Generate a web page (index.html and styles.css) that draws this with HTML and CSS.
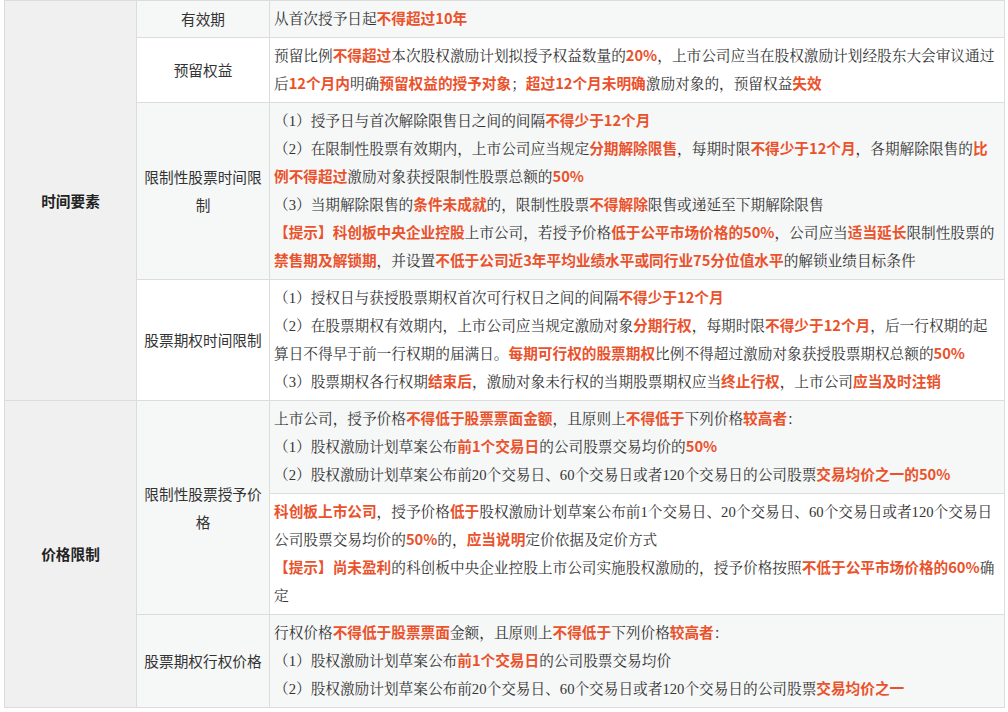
FILE: index.html
```html
<!DOCTYPE html>
<html lang="zh-CN">
<head>
<meta charset="utf-8">
<link rel="stylesheet" href="styles.css">
</head>
<body>
<table class="grid">
  <colgroup>
    <col class="c1"><col class="c2"><col class="c3">
  </colgroup>
  <tbody>
    <tr class="alt">
      <td class="cat" rowspan="4">时间要素</td>
      <td class="label">有效期</td>
      <td class="body"><div>从首次授予日起<b>不得超过10年</b></div></td>
    </tr>
    <tr>
      <td class="label">预留权益</td>
      <td class="body"><div>预留比例<b>不得超过</b>本次股权激励计划拟授予权益数量的<b>20%</b>，上市公司应当在股权激励计划经股东大会审议通过后<b>12个月内</b>明确<b>预留权益的授予对象</b>；<b>超过12个月未明确</b>激励对象的，预留权益<b>失效</b></div></td>
    </tr>
    <tr class="alt">
      <td class="label">限制性股票时间限制</td>
      <td class="body">
        <div>（1）授予日与首次解除限售日之间的间隔<b>不得少于12个月</b></div>
        <div>（2）在限制性股票有效期内，上市公司应当规定<b>分期解除限售</b>，每期时限<b>不得少于12个月</b>，各期解除限售的<b>比例不得超过</b>激励对象获授限制性股票总额的<b>50%</b></div>
        <div>（3）当期解除限售的<b>条件未成就</b>的，限制性股票<b>不得解除</b>限售或递延至下期解除限售</div>
        <div><b>【提示】科创板中央企业控股</b>上市公司，若授予价格<b>低于公平市场价格的50%</b>，公司应当<b>适当延长</b>限制性股票的<b>禁售期及解锁期</b>，并设置<b>不低于公司近3年平均业绩水平或同行业75分位值水平</b>的解锁业绩目标条件</div>
      </td>
    </tr>
    <tr>
      <td class="label">股票期权时间限制</td>
      <td class="body">
        <div>（1）授权日与获授股票期权首次可行权日之间的间隔<b>不得少于12个月</b></div>
        <div>（2）在股票期权有效期内，上市公司应当规定激励对象<b>分期行权</b>，每期时限<b>不得少于12个月</b>，后一行权期的起算日不得早于前一行权期的届满日。<b>每期可行权的股票期权</b>比例不得超过激励对象获授股票期权总额的<b>50%</b></div>
        <div>（3）股票期权各行权期<b>结束后</b>，激励对象未行权的当期股票期权应当<b>终止行权</b>，上市公司<b>应当及时注销</b></div>
      </td>
    </tr>
    <tr class="alt">
      <td class="cat" rowspan="3">价格限制</td>
      <td class="label" rowspan="2">限制性股票授予价格</td>
      <td class="body">
        <div>上市公司，授予价格<b>不得低于股票票面金额</b>，且原则上<b>不得低于</b>下列价格<b>较高者</b>：</div>
        <div>（1）股权激励计划草案公布<b>前1个交易日</b>的公司股票交易均价的<b>50%</b></div>
        <div>（2）股权激励计划草案公布前20个交易日、60个交易日或者120个交易日的公司股票<b>交易均价之一的50%</b></div>
      </td>
    </tr>
    <tr>
      <td class="body">
        <div><b>科创板上市公司</b>，授予价格<b>低于</b>股权激励计划草案公布前1个交易日、20个交易日、60个交易日或者120个交易日公司股票交易均价的<b>50%</b>的，<b>应当说明</b>定价依据及定价方式</div>
        <div><b>【提示】尚未盈利</b>的科创板中央企业控股上市公司实施股权激励的，授予价格按照<b>不低于公平市场价格的60%</b>确定</div>
      </td>
    </tr>
    <tr class="alt">
      <td class="label">股票期权行权价格</td>
      <td class="body">
        <div>行权价格<b>不得低于股票票面</b>金额，且原则上<b>不得低于</b>下列价格<b>较高者</b>：</div>
        <div>（1）股权激励计划草案公布<b>前1个交易日</b>的公司股票交易均价</div>
        <div>（2）股权激励计划草案公布前20个交易日、60个交易日或者120个交易日的公司股票<b>交易均价之一</b></div>
      </td>
    </tr>
  </tbody>
</table>
</body>
</html>
```

FILE: styles.css
```css
html, body {
  margin: 0;
  padding: 0;
  background: #ffffff;
}

body {
  font-family: "Liberation Serif", "Noto Serif CJK SC", "Noto Sans CJK SC", serif;
  font-size: 14.67px;
  color: #333333;
}

.grid {
  margin: 0 0 0 4px;
  width: 1000px;
  table-layout: fixed;
  border-collapse: collapse;
}

.c1 { width: 132px; }
.c2 { width: 133px; }
.c3 { width: 735px; }

.grid td {
  border: 1px solid #dcdcdc;
  padding: 4px;
  line-height: 28px;
  vertical-align: middle;
  background: #ffffff;
}

.grid tr.alt td {
  background: #f6f7f7;
}

.grid td.cat,
.grid tr.alt td.cat {
  background: #f0f0f0;
  text-align: center;
  font-family: "Noto Sans CJK SC", sans-serif;
  font-weight: 700;
  color: #222222;
}

.grid td.label {
  text-align: center;
  font-family: "Noto Sans CJK SC", sans-serif;
  color: #333333;
}

.grid td.body {
  text-align: left;
}

.body div {
  line-height: 28px;
}

.body b {
  font-family: "Noto Sans CJK SC", sans-serif;
  font-weight: 700;
  color: #ea522c;
  line-height: 1;
}
```
